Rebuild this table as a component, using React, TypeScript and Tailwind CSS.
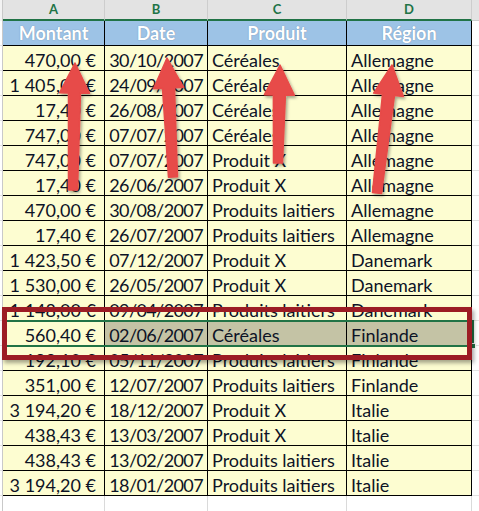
import React from 'react';

const rows: string[][] = [
  ['470,00 €', '30/10/2007', 'Céréales', 'Allemagne'],
  ['1 405,00 €', '24/09/2007', 'Céréales', 'Allemagne'],
  ['17,40 €', '26/08/2007', 'Céréales', 'Allemagne'],
  ['747,00 €', '07/07/2007', 'Céréales', 'Allemagne'],
  ['747,00 €', '07/07/2007', 'Produit X', 'Allemagne'],
  ['17,40 €', '26/06/2007', 'Produit X', 'Allemagne'],
  ['470,00 €', '30/08/2007', 'Produits laitiers', 'Allemagne'],
  ['17,40 €', '26/07/2007', 'Produits laitiers', 'Allemagne'],
  ['1 423,50 €', '07/12/2007', 'Produit X', 'Danemark'],
  ['1 530,00 €', '26/05/2007', 'Produit X', 'Danemark'],
  ['1 148,00 €', '09/04/2007', 'Produits laitiers', 'Danemark'],
  ['560,40 €', '02/06/2007', 'Céréales', 'Finlande'],
  ['192,10 €', '05/11/2007', 'Produits laitiers', 'Finlande'],
  ['351,00 €', '12/07/2007', 'Produits laitiers', 'Finlande'],
  ['3 194,20 €', '18/12/2007', 'Produit X', 'Italie'],
  ['438,43 €', '13/03/2007', 'Produit X', 'Italie'],
  ['438,43 €', '13/02/2007', 'Produits laitiers', 'Italie'],
  ['3 194,20 €', '18/01/2007', 'Produits laitiers', 'Italie'],
];

const SELECTED = 11;

// tail -> tip, drawn as a tapered shaft plus a triangular head
const arrows = [
  { x0: 73, y0: 190, x1: 75, y1: 63 },
  { x0: 173, y0: 177, x1: 167, y1: 58 },
  { x0: 278, y0: 163, x1: 280, y1: 65 },
  { x0: 377, y0: 193, x1: 392, y1: 65 },
];

const arrowPoints = (a: { x0: number; y0: number; x1: number; y1: number }) => {
  const dx = a.x1 - a.x0;
  const dy = a.y1 - a.y0;
  const len = Math.hypot(dx, dy);
  const ux = dx / len;
  const uy = dy / len;
  const nx = -uy;
  const ny = ux;
  const head = 30;
  const hw = 15;
  const bx = a.x1 - ux * head;
  const by = a.y1 - uy * head;
  const sw0 = 4.5;
  const sw1 = 6;
  const p = (x: number, y: number) => `${x.toFixed(1)},${y.toFixed(1)}`;
  return [
    p(a.x0 + nx * sw0, a.y0 + ny * sw0),
    p(bx + nx * sw1, by + ny * sw1),
    p(bx + nx * hw, by + ny * hw),
    p(a.x1, a.y1),
    p(bx - nx * hw, by - ny * hw),
    p(bx - nx * sw1, by - ny * sw1),
    p(a.x0 - nx * sw0, a.y0 - ny * sw0),
  ].join(' ');
};

const font = { fontFamily: 'Lato, "Open Sans", sans-serif' };

export default function App() {
  return (
    <div className="relative w-[479px] h-[511px] overflow-hidden bg-white" style={font}>
      <div className="grid grid-cols-[3px_102px_103px_139px_125px_7px]">
        {/* column letters */}
        <div className="h-[21px] bg-[#f3f3f3] border-r border-[#c9c9c9]" />
        {['A', 'B', 'C', 'D'].map((l) => (
          <div
            key={l}
            className="h-[21px] bg-[#e3e3e3] border-r border-[#cdcdcd] border-b-2 border-b-[#217346] flex items-center justify-center text-[13px] font-bold text-[#217346]"
          >
            {l}
          </div>
        ))}
        <div className="h-[21px] bg-[#e3e3e3] border-b border-[#cdcdcd]" />

        {/* header row */}
        <div className="h-[25px] bg-white border-r border-[#c9c9c9] border-b border-b-[#e2e2e2]" />
        {['Montant', 'Date', 'Produit', 'Région'].map((h) => (
          <div
            key={h}
            className="h-[25px] bg-[#9dc3e6] border-r border-b border-black flex items-center justify-center text-[18px] font-bold text-white leading-none [text-shadow:0_0_1px_rgba(60,80,110,0.6)]"
          >
            {h}
          </div>
        ))}
        <div className="h-[25px] bg-white border-b border-[#e2e2e2]" />

        {/* data rows */}
        {rows.map((r, i) => {
          const sel = i === SELECTED;
          const cell = 'h-[25px] border-r border-b border-black flex items-center text-[18px] text-[#0d1326] whitespace-nowrap overflow-hidden leading-none pt-[3px]';
          const bg = sel ? 'bg-[#c4c3a5]' : 'bg-[#fdfdd1]';
          return (
            <React.Fragment key={i}>
              <div className="h-[25px] bg-white border-r border-[#c9c9c9] border-b border-b-[#e2e2e2]" />
              <div className={`${cell} bg-[#fdfdd1] justify-end pr-[8px]`}>{r[0].replace(/ /g, '\u00a0')}</div>
              <div className={`${cell} ${bg} justify-end pr-[4px] tracking-[-0.6px]`}>{r[1]}</div>
              <div className={`${cell} ${bg} pl-[4px]`}>{r[2]}</div>
              <div className={`${cell} ${bg} pl-[4px]`}>{r[3]}</div>
              <div className="h-[25px] bg-white border-b border-[#e2e2e2]" />
            </React.Fragment>
          );
        })}

        {/* empty row below */}
        <div className="h-[15px] bg-white border-r border-[#c9c9c9]" />
        <div className="h-[15px] bg-white border-r border-[#dadada]" />
        <div className="h-[15px] bg-white border-r border-[#dadada]" />
        <div className="h-[15px] bg-white border-r border-[#dadada]" />
        <div className="h-[15px] bg-white border-r border-[#dadada]" />
        <div className="h-[15px] bg-white" />
      </div>

      {/* selection outline */}
      <div className="absolute left-[3px] top-[320px] w-[471px] h-[27px] border-2 border-[#217346] pointer-events-none" />
      <div className="absolute left-[470px] top-[343px] w-[6px] h-[6px] bg-[#217346] border border-white pointer-events-none" />

      {/* red highlight box */}
      <div className="absolute left-[2px] top-[307px] w-[470px] h-[53px] border-[5px] border-[#9c1c24] shadow-[2px_3px_4px_rgba(0,0,0,0.35)] pointer-events-none" />

      {/* arrows */}
      <svg className="absolute inset-0 pointer-events-none" width="479" height="511" viewBox="0 0 479 511">
        <defs>
          <filter id="sh" x="-50%" y="-50%" width="200%" height="200%">
            <feDropShadow dx="1.5" dy="2" stdDeviation="1.5" floodColor="#000" floodOpacity="0.35" />
          </filter>
        </defs>
        {arrows.map((a, i) => (
          <polygon key={i} points={arrowPoints(a)} fill="#e74b48" strokeLinejoin="round" stroke="#e74b48" strokeWidth="1.5" filter="url(#sh)" />
        ))}
      </svg>
    </div>
  );
}
